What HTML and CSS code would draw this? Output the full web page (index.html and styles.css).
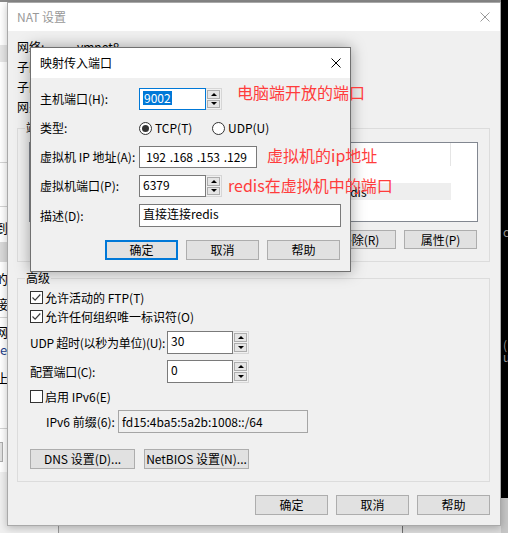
FILE: index.html
```html
<!DOCTYPE html>
<html lang="zh-CN">
<head>
    <meta charset="UTF-8">
    <title>NAT 设置</title>
    <link rel="stylesheet" href="styles.css">
</head>
<body>
<div class="desktop">

    <!-- window behind, only its right edge shows -->
    <div class="back-left">
        <div class="bl-top"></div>
        <div class="bl-band"></div>
        <div class="bl-rule bl-rule-a"></div>
        <div class="bl-rule bl-rule-b"></div>
        <div class="bl-char bl-c1">到</div>
        <div class="bl-block"></div>
        <div class="bl-char bl-c2">的</div>
        <div class="bl-char bl-c3">接</div>
        <div class="bl-rule bl-rule-c"></div>
        <div class="bl-char bl-c4">网</div>
        <div class="bl-char bl-latin">e</div>
        <div class="bl-char bl-c5">止</div>
        <div class="bl-rule bl-rule-d"></div>
        <div class="bl-button"></div>
        <div class="bl-fill"></div>
    </div>

    <div class="back-top"></div>

    <div class="back-right">
        <span class="br-char br-c1">c</span>
        <span class="br-char br-c2">(</span>
        <span class="br-char br-c3">u</span>
        <div class="br-bottom"></div>
    </div>

    <div class="back-bottom">
        <div class="bb-a"></div>
        <div class="bb-b"></div>
        <div class="bb-c"></div>
    </div>

    <!-- NAT settings window (inactive) -->
    <section class="window nat">
        <header class="titlebar">
            <span>NAT 设置</span>
            <svg class="close" viewBox="0 0 10 10"><path d="M0.5 0.5L9.5 9.5M9.5 0.5L0.5 9.5" stroke="#9a9a9a" stroke-width="1"/></svg>
        </header>

        <div class="nat-body">
            <div class="info">
                <div class="info-row"><span class="info-label">网络:</span><span>vmnet8</span></div>
                <div class="info-row"><span class="info-label">子网 IP:</span><span>192.168.153.0</span></div>
                <div class="info-row"><span class="info-label">子网掩码:</span><span>255.255.255.0</span></div>
                <div class="info-row"><span class="info-label">网关 IP(G):</span><span>192.168.153.2</span></div>
            </div>

            <fieldset class="group forward">
                <legend>端口转发(F)</legend>
                <div class="listview">
                    <div class="lv-head">
                        <span class="col-1">主机端口</span>
                        <span class="col-2">类型</span>
                        <span class="col-3">虚拟机 IP 地址</span>
                        <span class="col-4">描述</span>
                    </div>
                    <div class="lv-row"></div>
                    <div class="lv-row selected">
                        <span class="col-1">9002</span>
                        <span class="col-2">TCP</span>
                        <span class="col-3">192.168.153.129:6379</span>
                        <span class="col-4">直接连接redis</span>
                    </div>
                </div>
                <div class="list-actions">
                    <button class="btn">添加(A)...</button>
                    <button class="btn">移除(R)</button>
                    <button class="btn">属性(P)</button>
                </div>
            </fieldset>

            <fieldset class="group advanced">
                <legend>高级</legend>
                <label class="check-row"><span class="checkbox"><svg viewBox="0 0 11 11"><path d="M1.5 5.5l2.6 2.6 5.2-5.6" fill="none" stroke="#3c3c3c" stroke-width="1.2"/></svg></span>允许活动的 FTP(T)</label>
                <label class="check-row"><span class="checkbox"><svg viewBox="0 0 11 11"><path d="M1.5 5.5l2.6 2.6 5.2-5.6" fill="none" stroke="#3c3c3c" stroke-width="1.2"/></svg></span>允许任何组织唯一标识符(O)</label>

                <div class="field-row udp-row">
                    <span class="field-label">UDP 超时(以秒为单位)(U):</span>
                    <div class="spin">
                        <div class="spin-input">30</div>
                        <div class="spin-btns"><span class="spin-up"></span><span class="spin-down"></span></div>
                    </div>
                </div>
                <div class="field-row port-row">
                    <span class="field-label">配置端口(C):</span>
                    <div class="spin">
                        <div class="spin-input">0</div>
                        <div class="spin-btns"><span class="spin-up"></span><span class="spin-down"></span></div>
                    </div>
                </div>

                <label class="check-row ipv6-row"><span class="checkbox"></span>启用 IPv6(E)</label>

                <div class="prefix-row">
                    <span class="prefix-label">IPv6 前缀(6):</span>
                    <div class="prefix-input">fd15:4ba5:5a2b:1008::/64</div>
                </div>

                <div class="setting-buttons">
                    <button class="btn wide">DNS 设置(D)...</button>
                    <button class="btn wide">NetBIOS 设置(N)...</button>
                </div>
            </fieldset>

            <div class="footer-actions">
                <button class="btn">确定</button>
                <button class="btn">取消</button>
                <button class="btn">帮助</button>
            </div>
        </div>
    </section>

    <!-- Map incoming port dialog (active) -->
    <section class="window mapping">
        <header class="titlebar">
            <span>映射传入端口</span>
            <svg class="close" viewBox="0 0 10 10"><path d="M0.5 0.5L9.5 9.5M9.5 0.5L0.5 9.5" stroke="#000" stroke-width="1"/></svg>
        </header>

        <div class="mapping-body">
            <div class="form">
                <span>主机端口(H):</span>
                <div class="spin">
                    <div class="spin-input focused"><span class="sel">9002</span></div>
                    <div class="spin-btns"><span class="spin-up"></span><span class="spin-down"></span></div>
                </div>

                <span>类型:</span>
                <div class="radios">
                    <label class="radio-option tcp"><span class="radio checked"></span>TCP(T)</label>
                    <label class="radio-option"><span class="radio"></span>UDP(U)</label>
                </div>

                <span>虚拟机 IP 地址(A):</span>
                <div class="ip-input">
                    <span class="octet">192</span><span class="dot">.</span>
                    <span class="octet">168</span><span class="dot">.</span>
                    <span class="octet">153</span><span class="dot">.</span>
                    <span class="octet">129</span>
                </div>

                <span>虚拟机端口(P):</span>
                <div class="spin">
                    <div class="spin-input">6379</div>
                    <div class="spin-btns"><span class="spin-up"></span><span class="spin-down"></span></div>
                </div>

                <span>描述(D):</span>
                <div class="text-input">直接连接redis</div>
            </div>

            <div class="dialog-actions">
                <button class="btn default">确定</button>
                <button class="btn">取消</button>
                <button class="btn">帮助</button>
            </div>
        </div>
    </section>

    <!-- red notes drawn over the screenshot -->
    <div class="note note-host">电脑端开放的端口</div>
    <div class="note note-ip">虚拟机的ip地址</div>
    <div class="note note-port">redis在虚拟机中的端口</div>

</div>
</body>
</html>
```

FILE: styles.css
```css
* {
    margin: 0;
    padding: 0;
    box-sizing: border-box;
}

body {
    font-family: "Noto Sans CJK SC", "Noto Sans", sans-serif;
    font-size: 12px;
    line-height: 16px;
    color: #000;
    background: #fff;
}

.desktop {
    position: relative;
    width: 508px;
    height: 533px;
    overflow: hidden;
    background: #fff;
}

/* ---------- things behind the windows ---------- */

.back-left {
    position: absolute;
    left: 0;
    top: 0;
    width: 7px;
    height: 533px;
    display: flex;
    flex-direction: column;
    overflow: hidden;
    background: #fff;
}

.bl-top {
    height: 2px;
    background: #8a8a8a;
}

.bl-band {
    margin-top: 43px;
    height: 17px;
    background: #e6e6e6;
}

.bl-rule {
    height: 1px;
    background: #d4d4d4;
}

.bl-rule-a { margin-top: 100px; }
.bl-rule-b { margin-top: 43px; }
.bl-rule-c { margin-top: 5px; }
.bl-rule-d { margin-top: 42px; }

.bl-char {
    height: 16px;
    margin-left: -5px;
    white-space: nowrap;
    font-size: 13px;
}

.bl-c1 { margin-top: 13px; }
.bl-c2 { margin-top: 9px; }
.bl-c3 { margin-top: 9px; }
.bl-c4 { margin-top: 6px; }
.bl-c5 { margin-top: 12px; }

.bl-latin {
    margin-left: 0;
    margin-top: 2px;
    color: #1e3f8a;
}

.bl-block {
    margin-top: 6px;
    height: 20px;
    background: #dadada;
}

.bl-button {
    margin-top: 13px;
    height: 20px;
    width: 3px;
    background: #e1e1e1;
    border: 1px solid #adadad;
    border-left: 0;
}

.bl-fill {
    margin-top: 10px;
    flex: 1;
    background: #f0f0f0;
}

.back-top {
    position: absolute;
    left: 7px;
    right: 7px;
    top: 0;
    height: 2px;
    background: #8a8a8a;
}

.back-right {
    position: absolute;
    right: 0;
    top: 0;
    width: 7px;
    height: 533px;
    background: #000;
    display: flex;
    flex-direction: column;
    overflow: hidden;
}

.br-char {
    display: block;
    height: 16px;
    padding-left: 2px;
    color: #9a9a9a;
}

.br-c1 { margin-top: 224px; }
.br-c2 { margin-top: 97px; }
.br-c3 { margin-top: -4px; }

.br-bottom {
    margin-top: auto;
    height: 35px;
    background: #c6c6c6;
}

.back-bottom {
    position: absolute;
    left: 0;
    right: 7px;
    bottom: 0;
    height: 8px;
    display: flex;
}

.bb-a {
    width: 59px;
    background: #f0f0f0;
    border-right: 1px solid #9a9a9a;
}

.bb-b {
    width: 344px;
    background: #e4e4e4;
    border-right: 1px solid #707070;
}

.bb-c {
    flex: 1;
    background: #dcdcdc;
}

/* ---------- windows ---------- */

.window {
    position: absolute;
    background: #f0f0f0;
}

.titlebar {
    display: flex;
    align-items: center;
    justify-content: space-between;
    background: #fff;
}

.close {
    width: 10px;
    height: 10px;
}

.btn {
    width: 73px;
    height: 20px;
    font: inherit;
    line-height: 16px;
    color: #000;
    background: #e1e1e1;
    border: 1px solid #adadad;
    white-space: nowrap;
}

.btn.default {
    border: 2px solid #0078d7;
}

/* NAT window */

.nat {
    left: 7px;
    top: 2px;
    width: 494px;
    border: 1px solid #a9a9a9;
    box-shadow: 0 2px 8px rgba(0, 0, 0, 0.25);
}

.nat .titlebar {
    height: 28px;
    padding: 0 10px 0 9px;
    color: #999;
}

.nat-body {
    padding: 6px 10px 10px 9px;
}

.info-row {
    display: flex;
    align-items: center;
    height: 20px;
    white-space: nowrap;
}

.info-label {
    width: 60px;
}

.group {
    min-width: 0;
    border: 1px solid #dcdcdc;
}

.group legend {
    padding: 0 1px;
    line-height: 16px;
}

.forward {
    margin-top: 3px;
    padding: 6px 11px 12px;
}

.forward legend {
    margin-left: -4px;
}

.listview {
    height: 80px;
    border: 1px solid #828790;
    background: #fff;
}

.lv-head {
    display: flex;
    height: 23px;
}

.lv-head span {
    border-right: 1px solid #e5e5e5;
    padding-left: 5px;
    line-height: 23px;
    white-space: nowrap;
}

.lv-row {
    display: flex;
    height: 17px;
    line-height: 17px;
}

.lv-row span {
    padding-left: 3px;
    white-space: nowrap;
}

.lv-row.selected {
    width: 421px;
    background: #eeeeee;
}

.col-1 { width: 70px; }
.col-2 { width: 50px; }
.col-3 { width: 138px; }
.col-4 { width: 163px; }

.list-actions {
    display: flex;
    justify-content: flex-end;
    gap: 8px;
    margin-top: 8px;
    padding-right: 1px;
}

.list-actions .btn {
    height: 19px;
}

.advanced {
    margin-top: 8px;
    padding: 2px 12px 12px;
}

.advanced legend {
    margin-left: -5px;
}

.check-row {
    display: flex;
    align-items: center;
    gap: 2px;
    height: 19px;
    white-space: nowrap;
}

.checkbox {
    display: flex;
    flex-shrink: 0;
    width: 13px;
    height: 13px;
    border: 1px solid #333;
    background: #fff;
}

.checkbox svg {
    width: 11px;
    height: 11px;
}

.field-row {
    display: flex;
    align-items: center;
}

.field-label {
    flex-shrink: 0;
    width: 137px;
    white-space: nowrap;
    letter-spacing: -0.25px;
}

.udp-row { margin-top: 5px; }
.port-row { margin-top: 6px; }

.ipv6-row {
    margin-top: 4px;
}

.prefix-row {
    display: flex;
    align-items: center;
    margin-top: 4px;
    padding-left: 16px;
}

.prefix-label {
    flex-shrink: 0;
    width: 72px;
    white-space: nowrap;
}

.prefix-input {
    width: 190px;
    height: 23px;
    padding: 3px 3px 0;
    border: 1px solid #a5a5a5;
    background: #f0f0f0;
    white-space: nowrap;
}

.setting-buttons {
    display: flex;
    gap: 9px;
    margin-top: 16px;
}

.btn.wide {
    width: 105px;
}

.footer-actions {
    display: flex;
    justify-content: flex-end;
    gap: 8px;
    margin-top: 13px;
}

/* spin box */

.spin {
    display: flex;
    flex-shrink: 0;
    height: 23px;
}

.spin-input {
    width: 66px;
    padding: 1px 3px 0;
    border: 1px solid #7a7a7a;
    background: #fff;
}

.spin-input.focused {
    border-color: #0078d7;
}

.sel {
    display: inline-block;
    line-height: 14px;
    padding: 0 1px;
    color: #fff;
    background: #0078d7;
}

.spin-btns {
    width: 16px;
    display: flex;
    flex-direction: column;
    gap: 1px;
    padding: 1px;
    border: 1px solid #d6d6d6;
    border-left: 0;
    background: #f0f0f0;
}

.spin-btns span {
    flex: 1;
    display: flex;
    align-items: center;
    justify-content: center;
    background: #e5e5e5;
    border: 1px solid #adadad;
}

.spin-up::after {
    content: "";
    border-left: 3px solid transparent;
    border-right: 3px solid transparent;
    border-bottom: 3px solid #000;
}

.spin-down::after {
    content: "";
    border-left: 3px solid transparent;
    border-right: 3px solid transparent;
    border-top: 3px solid #000;
}

/* mapping dialog */

.mapping {
    left: 30px;
    top: 47px;
    width: 321px;
    border: 1px solid #707070;
    box-shadow: 0 0 14px rgba(0, 0, 0, 0.35);
}

.mapping .titlebar {
    height: 30px;
    padding: 0 9px;
}

.mapping-body {
    padding: 10px 10px 11px 9px;
}

.form {
    display: grid;
    grid-template-columns: 99px 1fr;
    row-gap: 7px;
    align-items: center;
    white-space: nowrap;
}

.form .spin {
    height: 22px;
}

.form .spin-input {
    width: 67px;
}

.radios {
    display: flex;
    align-items: center;
    height: 22px;
}

.radio-option {
    display: flex;
    align-items: center;
    gap: 3px;
}

.radio-option.tcp {
    width: 73px;
}

.radio {
    position: relative;
    width: 13px;
    height: 13px;
    border: 1px solid #333;
    border-radius: 50%;
    background: #fff;
}

.radio.checked::after {
    content: "";
    position: absolute;
    left: 2px;
    top: 2px;
    width: 7px;
    height: 7px;
    border-radius: 50%;
    background: #333;
}

.ip-input {
    display: flex;
    width: 118px;
    height: 22px;
    padding-left: 6px;
    line-height: 20px;
    border: 1px solid #7a7a7a;
    background: #fff;
}

.octet {
    width: 20px;
    text-align: center;
}

.dot {
    width: 7px;
    text-align: right;
}

.text-input {
    width: 202px;
    height: 23px;
    padding: 1px 3px 0;
    border: 1px solid #7a7a7a;
    background: #fff;
}

.dialog-actions {
    display: flex;
    justify-content: flex-end;
    gap: 8px;
    margin-top: 13px;
}

/* notes */

.note {
    position: absolute;
    font-size: 16px;
    line-height: 20px;
    color: #ff3c3c;
    white-space: nowrap;
}

.note-host {
    left: 237px;
    top: 82px;
}

.note-ip {
    left: 267px;
    top: 145px;
}

.note-port {
    left: 228px;
    top: 175px;
}
```
